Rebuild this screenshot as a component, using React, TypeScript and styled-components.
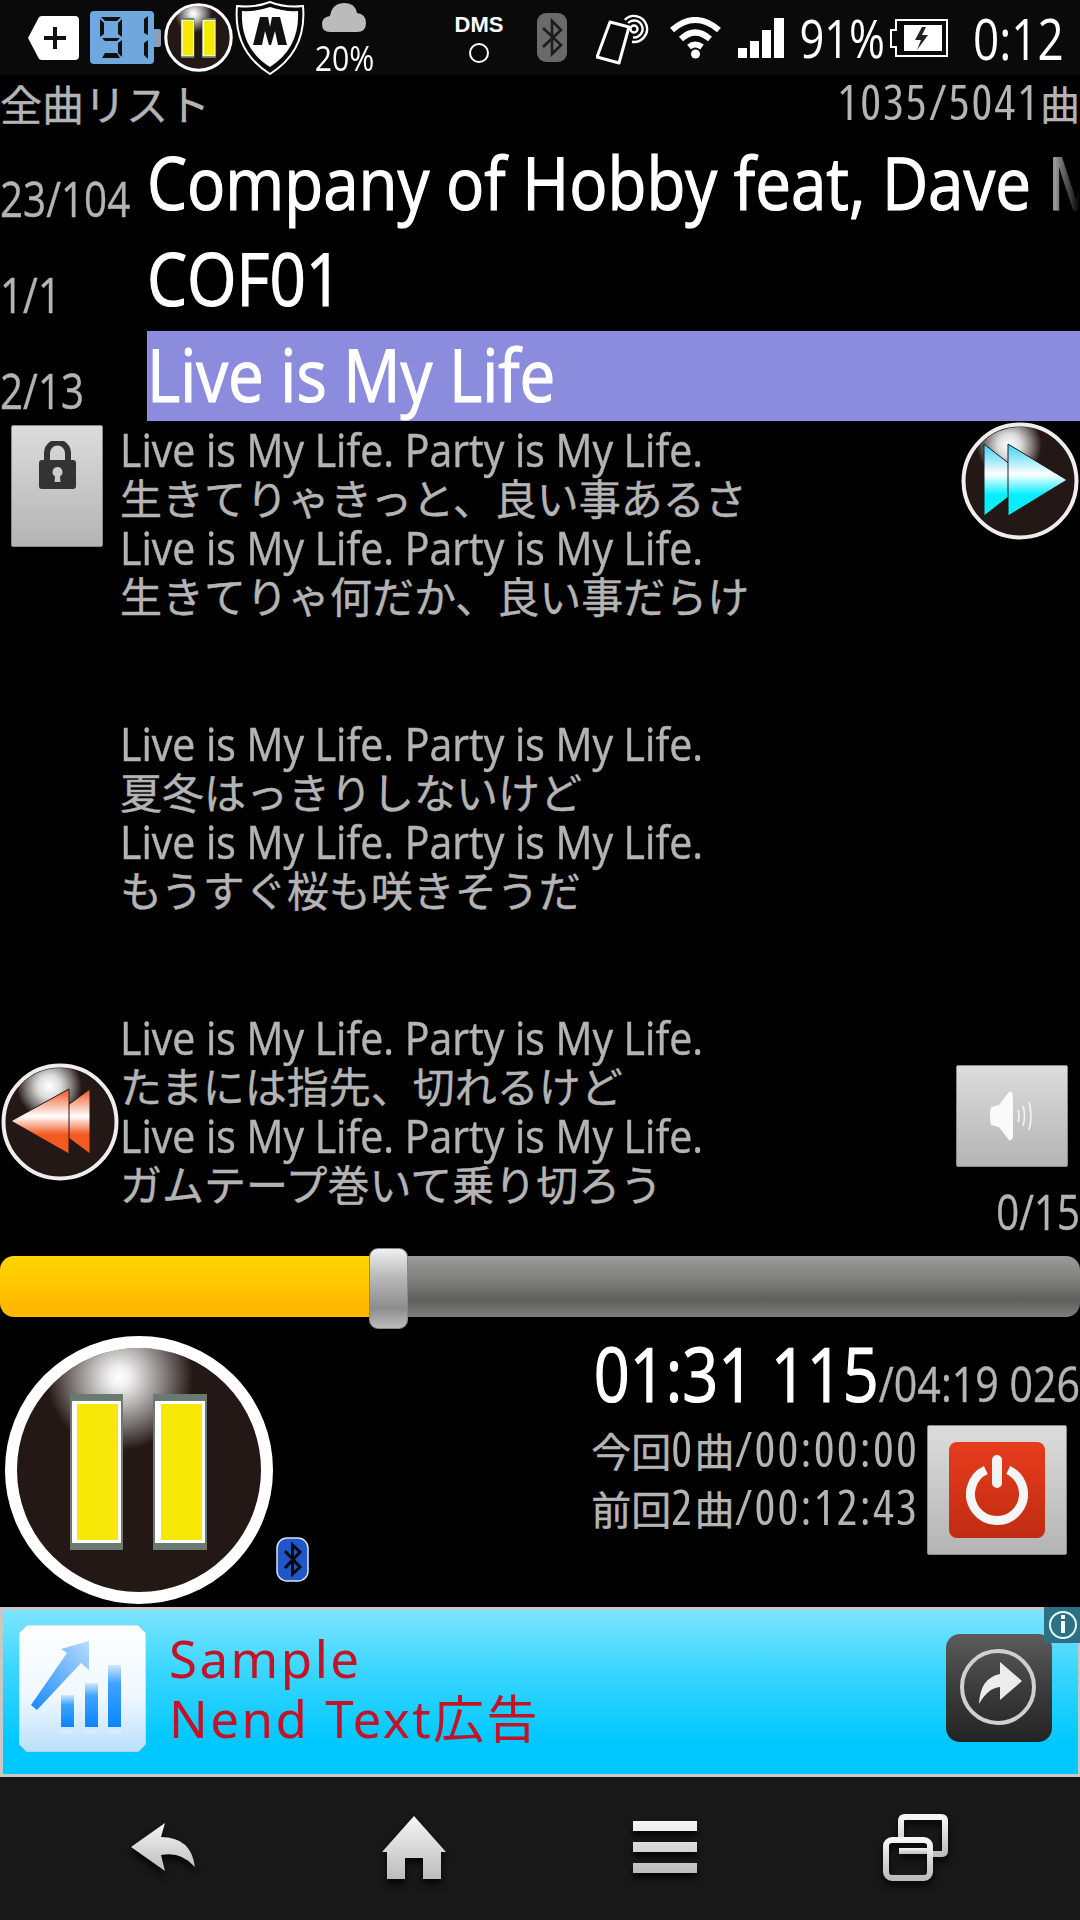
import React from 'react';
import styled, { createGlobalStyle } from 'styled-components';

const Global = createGlobalStyle`
  html, body { margin: 0; padding: 0; background: #000; }
  * { box-sizing: border-box; }
`;

const Page = styled.div`
  width: 1080px;
  height: 1920px;
  background: #000;
  display: flex;
  flex-direction: column;
  overflow: hidden;
  font-family: "Open Sans", "Noto Sans CJK JP", sans-serif;
  color: #b4b4b4;
`;

const Cjk = styled.span<{ $size: number }>`
  font-family: "Noto Sans CJK JP", sans-serif;
  font-size: ${p => p.$size}px;
  font-stretch: normal;
  -webkit-text-stroke: 0.4px #b4b4b4;
  letter-spacing: 0;
`;

/* status bar */
const StatusBar = styled.div`
  height: 75px;
  flex: none;
  background: #0a0a0a;
  display: flex;
  align-items: center;
`;
const Slot = styled.div<{ $ml: number; $w: number }>`
  margin-left: ${p => p.$ml}px;
  width: ${p => p.$w}px;
  flex: none;
  display: flex;
  flex-direction: column;
  align-items: center;
  color: #fff;
  svg { display: block; }
`;
const StatusText = styled.span<{ $size: number }>`
  font-size: ${p => p.$size}px;
  line-height: 50px;
  color: #fff;
  white-space: nowrap;
  transform: scaleX(0.82);
`;
const WeatherText = styled.span`
  font-size: 34px;
  line-height: 30px;
  color: #fff;
  margin-top: 11px;
  white-space: nowrap;
  transform: scaleX(0.89);
`;
const DmsText = styled.span`
  font-family: "Liberation Sans", sans-serif;
  font-weight: 700;
  font-size: 22px;
  line-height: 24px;
  color: #fff;
`;
const DmsDot = styled.span`
  width: 20px;
  height: 20px;
  margin-top: 6px;
  border: 2px solid #fff;
  border-radius: 50%;
`;

/* header */
const Header = styled.div`
  height: 64px;
  flex: none;
  display: flex;
  justify-content: space-between;
  align-items: flex-end;
  padding-bottom: 6px;
  font-size: 49px;
  font-stretch: 75%;
  letter-spacing: 2px;
  line-height: 60px;
  white-space: nowrap;
`;

/* track rows */
const TrackRow = styled.div`
  height: 96px;
  flex: none;
  display: flex;
  align-items: flex-start;
`;
const Count = styled.div`
  width: 147px;
  flex: none;
  font-size: 49px;
  line-height: 60px;
  margin-top: 29px;
  white-space: nowrap;
  -webkit-text-stroke: 0.4px #b4b4b4;
  transform: scaleX(0.824);
  transform-origin: left center;
`;
const Title = styled.div<{ $active?: boolean }>`
  flex: 1;
  height: 90px;
  min-width: 0;
  position: relative;
  overflow: hidden;
  font-size: 74px;
  line-height: 86px;
  color: #fff;
  white-space: nowrap;
  -webkit-text-stroke: 1.2px #fff;
  background: ${p => (p.$active ? '#8c8cdf' : 'transparent')};
`;
const TitleText = styled.span`
  display: inline-block;
  transform: scaleX(0.86);
  transform-origin: left center;
`;
const Fade = styled.div`
  position: absolute;
  top: 0;
  right: 0;
  bottom: 0;
  width: 42px;
  background: linear-gradient(to right, rgba(0, 0, 0, 0), #000);
`;

/* lyrics */
const LyricsPane = styled.div`
  height: 821px;
  flex: none;
  position: relative;
  padding-left: 120px;
`;
const LyricLine = styled.div`
  height: 49px;
  font-size: 45px;
  line-height: 45px;
  white-space: nowrap;
  -webkit-text-stroke: 0.5px #b4b4b4;
  transform: scaleX(0.912);
  transform-origin: left center;
`;
const CjkLine = styled.div`
  height: 49px;
  font-family: "Noto Sans CJK JP", sans-serif;
  font-size: 42px;
  line-height: 41px;
  white-space: nowrap;
  -webkit-text-stroke: 0.4px #b4b4b4;
`;
const Floating = styled.div<{ $left: number; $top: number }>`
  position: absolute;
  left: ${p => p.$left}px;
  top: ${p => p.$top}px;
  svg { display: block; }
`;
const GrayKey = styled.div<{ $w: number; $h: number }>`
  width: ${p => p.$w}px;
  height: ${p => p.$h}px;
  border-radius: 2px;
  background: linear-gradient(#dcdcdc, #b4b4b4);
  border: 1px solid #8a8a8a;
  display: flex;
  align-items: center;
  justify-content: center;
`;
const LockKey = styled(GrayKey)`
  align-items: flex-start;
  padding-top: 15px;
`;
const VolumeText = styled.div`
  position: absolute;
  right: 0;
  top: 754px;
  font-size: 49px;
  line-height: 60px;
  -webkit-text-stroke: 0.4px #b4b4b4;
  transform: scaleX(0.82);
  transform-origin: right center;
`;

/* seek bar */
const SeekArea = styled.div`
  height: 81px;
  flex: none;
  display: flex;
  align-items: flex-start;
  padding-top: 8px;
  position: relative;
`;
const SeekDone = styled.div`
  width: 372px;
  height: 61px;
  flex: none;
  border-radius: 14px 0 0 14px;
  background: linear-gradient(#ffd500 0%, #ffc800 45%, #ffb700 85%, #ffb900 100%);
`;
const SeekRest = styled.div`
  flex: 1;
  height: 61px;
  border-radius: 0 14px 14px 0;
  background: linear-gradient(#9a9a9a 0%, #7e7f7c 40%, #5f605d 72%, #7d7d7d 100%);
`;
const Thumb = styled.div`
  position: absolute;
  left: 369px;
  top: 0;
  width: 39px;
  height: 81px;
  border-radius: 9px;
  border: 1px solid #888;
  background: linear-gradient(#f0f0f0 0%, #b9b9b9 35%, #8d8d8d 75%, #bdbdbd 100%);
`;

/* transport */
const Transport = styled.div`
  height: 278px;
  flex: none;
  position: relative;
  display: flex;
`;
const PauseCell = styled.div`
  margin: 6px 0 0 4px;
  width: 270px;
  height: 270px;
  flex: none;
  svg { display: block; }
`;
const BtCell = styled.div`
  align-self: flex-start;
  margin: 208px 0 0 2px;
  width: 33px;
  flex: none;
  svg { display: block; }
`;
const Times = styled.div`
  flex: 1;
  display: flex;
  flex-direction: column;
  align-items: flex-end;
  min-width: 0;
`;
const TimeLine = styled.div`
  height: 88px;
  display: flex;
  align-items: baseline;
  font-size: 49px;
  line-height: 88px;
  white-space: nowrap;
  -webkit-text-stroke: 0.4px #b4b4b4;
  transform: scaleX(0.84);
  transform-origin: right center;
`;
const TimeNow = styled.span`
  font-size: 75px;
  color: #fff;
  -webkit-text-stroke: 1.2px #fff;
`;
const SessionArea = styled.div`
  display: flex;
  align-self: stretch;
  justify-content: flex-end;
`;
const Sessions = styled.div`
  display: flex;
  flex-direction: column;
  margin-right: 8px;
  padding-top: 2px;
  align-items: flex-end;
`;
const SessionLine = styled.div`
  height: 58px;
  font-size: 49px;
  font-stretch: 75%;
  letter-spacing: 2.2px;
  line-height: 58px;
  white-space: nowrap;
`;
const PowerKey = styled(GrayKey)`
  margin-right: 13px;
  margin-top: 8px;
`;
const PowerFace = styled.div`
  width: 96px;
  height: 96px;
  border-radius: 8px;
  background: linear-gradient(#e63c1c, #c02c12);
  display: flex;
  align-items: center;
  justify-content: center;
`;

/* ad */
const Ad = styled.div`
  height: 170px;
  flex: none;
  position: relative;
  display: flex;
  align-items: flex-start;
  border: 3px solid #c8c8c8;
  border-width: 3px 2px 3px 3px;
  background: linear-gradient(#7de5ff 0%, #3dd6ff 35%, #00c8ff 80%, #00c8ff 100%);
  svg { display: block; }
`;
const AdIcon = styled.div`
  margin: 15px 0 0 16px;
  flex: none;
`;
const AdText = styled.div`
  margin: 18px 0 0 23px;
  font-family: "Noto Sans", "Noto Sans CJK JP", sans-serif;
  font-size: 51px;
  line-height: 60px;
  letter-spacing: 2.5px;
  color: #c41227;
  flex: 1;
  white-space: nowrap;
`;
const AdGo = styled.div`
  margin: 24px 26px 0 0;
  flex: none;
`;
const AdInfo = styled.div`
  position: absolute;
  right: -2px;
  top: -3px;
`;

/* nav */
const NavBar = styled.div`
  flex: 1;
  background: #181818;
  display: grid;
  grid-template-columns: repeat(4, 251px);
  padding: 0 0 3px 37px;
  align-items: center;
  justify-items: center;
  svg { display: block; filter: drop-shadow(0 5px 3px rgba(0, 0, 0, 0.8)); }
`;

/* drawings */
const PauseGlyph = ({ size }: { size: number }) => (
  <svg width={size} height={size} viewBox="0 0 270 270">
    <defs>
      <radialGradient id="pg" cx="0.42" cy="0.12" r="0.3">
        <stop offset="0" stopColor="#fff" />
        <stop offset="0.15" stopColor="#eee" />
        <stop offset="1" stopColor="#fff" stopOpacity="0" />
      </radialGradient>
    </defs>
    <circle cx="135" cy="135" r="128" fill="#231815" stroke="#fff" strokeWidth="12" />
    <circle cx="135" cy="135" r="122" fill="url(#pg)" />
    <rect x="66" y="59" width="53" height="156" fill="#6b7a70" />
    <rect x="149" y="59" width="54" height="156" fill="#6b7a70" />
    <rect x="68" y="66" width="49" height="142" fill="#fff" />
    <rect x="151" y="66" width="50" height="142" fill="#fff" />
    <rect x="73" y="69" width="41" height="136" fill="#f6e908" />
    <rect x="157" y="69" width="41" height="136" fill="#f6e908" />
  </svg>
);

const SeekGlyph = ({ dir }: { dir: 'ff' | 'rw' }) => {
  const id = dir === 'ff' ? 'ffg' : 'rwg';
  const c = dir === 'ff' ? '#08eeff' : '#f25a22';
  const top = dir === 'ff' ? '#35d0f5' : '#f0531c';
  return (
    <svg width="120" height="120" viewBox="0 0 120 120">
      <defs>
        <radialGradient id={id + 'h'} cx="0.4" cy="0.17" r="0.3">
          <stop offset="0" stopColor="#fff" />
          <stop offset="0.35" stopColor="#ddd" />
          <stop offset="1" stopColor="#fff" stopOpacity="0" />
        </radialGradient>
        <linearGradient id={id} x1="0" y1="0" x2="0" y2="1">
          <stop offset="0" stopColor={top} />
          <stop offset="0.42" stopColor="#fff" />
          <stop offset="0.7" stopColor={c} />
          <stop offset="1" stopColor={c} />
        </linearGradient>
      </defs>
      <circle cx="60" cy="60" r="56.5" fill="#231815" stroke="#eee" strokeWidth="4" />
      <circle cx="60" cy="60" r="54" fill={`url(#${id}h)`} />
      {dir === 'ff' ? (
        <g fill={`url(#${id})`} stroke="#231815" strokeWidth="1">
          <path d="M24 23 L70 59 L24 95 Z" />
          <path d="M48 23 L107 59 L48 95 Z" />
        </g>
      ) : (
        <g fill={`url(#${id})`} stroke="#231815" strokeWidth="1">
          <path d="M90 27 L46 59 L90 92 Z" />
          <path d="M69 27 L11 59 L69 92 Z" />
        </g>
      )}
    </svg>
  );
};

const LockGlyph = () => (
  <svg width="37" height="48" viewBox="0 0 37 48">
    <path d="M8 20 V12 A10.5 10.5 0 0 1 29 12 V20" fill="none" stroke="#333" strokeWidth="6" />
    <path fillRule="evenodd" fill="#333" d="M3 19 H34 Q37 19 37 22 V45 Q37 48 34 48 H3 Q0 48 0 45 V22 Q0 19 3 19 Z M18.5 26 A5 5 0 0 0 16 35.3 L15.5 41 H21.5 L21 35.3 A5 5 0 0 0 18.5 26 Z" />
  </svg>
);

const SpeakerGlyph = () => (
  <svg width="46" height="50" viewBox="0 0 46 50">
    <path d="M2 16 Q0 25 2 34 L10 36 L20 49 Q24 50 24 44 V6 Q24 0 20 1 L10 14 Z" fill="#fafafa" />
    <g fill="none" stroke="#f4f4f4" strokeWidth="1.6">
      <path d="M29 19 Q31 25 29 31" />
      <path d="M34 15 Q37 25 34 35" />
      <path d="M40 11 Q44 25 40 39" />
    </g>
  </svg>
);

const PowerGlyph = () => (
  <svg width="62" height="70" viewBox="0 0 62 70">
    <path d="M19.8 15 A26.5 26.5 0 1 0 42.2 15" fill="none" stroke="#f6f6f6" strokeWidth="9" />
    <rect x="26" y="0" width="10" height="33" rx="5" fill="#f2f2f2" />
  </svg>
);

const BtBadge = () => (
  <svg width="33" height="45" viewBox="0 0 33 45">
    <rect x="1" y="1" width="31" height="43" rx="10" fill="#1f56c8" stroke="#d8e2f8" strokeWidth="1.5" />
    <path d="M9 14 L24 30 L16.5 37 V8 L24 15 L9 31" fill="none" stroke="#0a0a0a" strokeWidth="3" />
  </svg>
);

const AdChart = () => (
  <svg width="127" height="127" viewBox="0 0 127 127">
    <defs>
      <linearGradient id="adb" x1="0" y1="0" x2="0" y2="1">
        <stop offset="0" stopColor="#fdfeff" />
        <stop offset="0.55" stopColor="#f0f9ff" />
        <stop offset="1" stopColor="#b9e0fb" />
      </linearGradient>
      <linearGradient id="adbar" x1="0" y1="0" x2="0" y2="1">
        <stop offset="0" stopColor="#cfe8ff" />
        <stop offset="0.3" stopColor="#3da3ff" />
        <stop offset="1" stopColor="#0a84ff" />
      </linearGradient>
      <linearGradient id="adarr" x1="1" y1="0" x2="0" y2="1">
        <stop offset="0" stopColor="#b8dcff" />
        <stop offset="1" stopColor="#1788ff" />
      </linearGradient>
    </defs>
    <path d="M8 0 H119 L127 8 V119 L119 127 H8 L0 119 V8 Z" fill="url(#adb)" stroke="#a8c8dc" />
    <path d="M12 80 L48 28 L42 24 L70 16 L70 45 L62 38 L18 85 Z" fill="url(#adarr)" />
    <rect x="42" y="70" width="13" height="32" fill="url(#adbar)" />
    <rect x="66" y="58" width="13" height="44" fill="url(#adbar)" />
    <rect x="89" y="40" width="13" height="62" fill="url(#adbar)" />
    <g fill="#d6ecff">
      <rect x="42" y="105" width="13" height="3" />
      <rect x="66" y="105" width="13" height="3" />
      <rect x="89" y="105" width="13" height="3" />
    </g>
  </svg>
);

const AdArrow = () => (
  <svg width="106" height="108" viewBox="0 0 106 108">
    <defs>
      <linearGradient id="adg" x1="0" y1="0" x2="0" y2="1">
        <stop offset="0" stopColor="#5c5c5c" />
        <stop offset="0.5" stopColor="#3c3c3c" />
        <stop offset="1" stopColor="#242424" />
      </linearGradient>
    </defs>
    <rect width="106" height="108" rx="14" fill="url(#adg)" />
    <circle cx="52" cy="53" r="36" fill="none" stroke="#d0d0d0" strokeWidth="4" />
    <path d="M33 70 Q34 44 54 40 V28 L76 47 L54 66 V53 Q42 54 33 70 Z" fill="#ececec" />
  </svg>
);

const InfoBadge = () => (
  <svg width="36" height="36" viewBox="0 0 36 36">
    <rect width="36" height="36" fill="#2f6f82" />
    <circle cx="19" cy="18" r="13" fill="none" stroke="#dff" strokeWidth="2" />
    <rect x="17" y="14" width="4" height="12" fill="#eff" />
    <rect x="17" y="8" width="4" height="4" fill="#eff" />
  </svg>
);

const NavGradient = () => (
  <defs>
    <linearGradient id="nv" x1="0" y1="0" x2="0" y2="1">
      <stop offset="0" stopColor="#f6f6f6" />
      <stop offset="1" stopColor="#bcbcbc" />
    </linearGradient>
  </defs>
);

const App = () => (
  <Page>
    <Global />
    <StatusBar>
      <Slot $ml={28} $w={51}>
        <svg width="51" height="44" viewBox="0 0 51 44">
          <path d="M10 3 Q11 0 14 0 H47 Q51 0 51 4 V40 Q51 44 47 44 H14 Q11 44 10 41 L0 22 Z" fill="#fff" />
          <path d="M25 20 H16 V24 H25 V33 H29 V24 H38 V20 H29 V11 H25 Z" fill="#111" />
        </svg>
      </Slot>
      <Slot $ml={11} $w={71}>
        <svg width="71" height="53" viewBox="0 0 71 53">
          <rect x="63" y="18" width="8" height="18" rx="2" fill="#8a9fb8" />
          <rect width="64" height="53" rx="4" fill="#6fa8dc" />
          <g fill="#111">
            <path d="M11 6 H31 L27 10 H15 Z" />
            <path d="M10 8 L14 12 V23 L10 26 Z" />
            <path d="M32 8 L28 12 V23 L32 26 Z" />
            <path d="M12 27 H30 L27 30 H15 Z" />
            <path d="M32 29 L28 32 V42 L32 46 Z" />
            <path d="M15 42 H27 L30 47 H12 Z" />
            <path d="M54 8 L58 5 V24 L54 22 Z" />
            <path d="M54 32 L58 29 V48 L54 44 Z" />
          </g>
        </svg>
      </Slot>
      <Slot $ml={3} $w={69}><PauseGlyph size={69} /></Slot>
      <Slot $ml={2} $w={70}>
        <svg width="70" height="74" viewBox="0 0 70 74">
          <path d="M35 1 Q50 7 68 5 Q72 50 35 73 Q-2 50 2 5 Q20 7 35 1 Z" fill="#0a0a0a" stroke="#fff" strokeWidth="2" />
          <path d="M35 6 Q50 11 63 10 Q65 47 35 66 Q5 47 7 10 Q20 11 35 6 Z" fill="#fff" />
          <path d="M18 44 L25 16 H33 L35 26 L37 16 H45 L52 44 H43 L40 30 L36 44 H34 L30 30 L27 44 Z" fill="#111" />
        </svg>
      </Slot>
      <Slot $ml={9} $w={60}>
        <svg width="44" height="29" viewBox="0 0 44 29">
          <path d="M8 29 Q0 29 0 21 Q0 14 8 13 Q10 0 23 0 Q33 0 35 10 Q44 11 44 20 Q44 29 35 29 Z" fill="#bbb" />
        </svg>
        <WeatherText>20%</WeatherText>
      </Slot>
      <Slot $ml={79} $w={52}><DmsText>DMS</DmsText><DmsDot /></Slot>
      <Slot $ml={32} $w={30}>
        <svg width="30" height="49" viewBox="0 0 30 49">
          <rect width="30" height="49" rx="9" fill="#6a6a6a" />
          <path d="M6 15 L24 32 L15 41 V8 L24 17 L6 34" fill="none" stroke="#1c1c1c" strokeWidth="2.6" />
        </svg>
      </Slot>
      <Slot $ml={30} $w={51}>
        <svg width="53" height="55" viewBox="0 0 53 55">
          <path d="M14 12 L33 17 L23 53 L1 47 Z" fill="#0a0a0a" stroke="#fff" strokeWidth="3" strokeLinejoin="round" />
          <g fill="none" stroke="#fff" strokeWidth="2.4">
            <path d="M28.8 9.8 A13 13 0 1 1 36 31.8" />
            <path d="M32 13 A8.5 8.5 0 1 1 37 27.4" />
            <circle cx="38" cy="19" r="3.5" />
          </g>
        </svg>
      </Slot>
      <Slot $ml={22} $w={51}>
        <svg width="51" height="42" viewBox="0 0 51 42">
          <g fill="none" stroke="#fff" strokeWidth="6">
            <path d="M2 13 Q25 -7 49 13" />
            <path d="M11 22 Q25 9 40 22" />
            <path d="M19 30 Q25 25 32 30" />
          </g>
          <circle cx="25.5" cy="37" r="4.5" fill="#fff" />
        </svg>
      </Slot>
      <Slot $ml={17} $w={46}>
        <svg width="46" height="40" viewBox="0 0 46 40">
          <rect x="0" y="30" width="9" height="10" fill="#fff" />
          <rect x="12" y="23" width="9" height="17" fill="#fff" />
          <rect x="24" y="12" width="9" height="28" fill="#fff" />
          <rect x="36" y="0" width="10" height="40" fill="#fff" />
        </svg>
      </Slot>
      <Slot $ml={18} $w={80}><StatusText $size={53}>91%</StatusText></Slot>
      <Slot $ml={8} $w={58}>
        <svg width="58" height="38" viewBox="0 0 58 38">
          <path d="M6 11 H1 V28 H6 V37 H57 V1 H6 Z" fill="none" stroke="#fff" strokeWidth="2" />
          <rect x="14" y="6" width="38" height="26" fill="#fff" />
          <path d="M32 8 L25 21 H31 L27 31 L38 16 H32 L36 8 Z" fill="#222" />
        </svg>
      </Slot>
      <Slot $ml={24} $w={92}><StatusText $size={56}>0:12</StatusText></Slot>
    </StatusBar>

    <Header>
      <Cjk $size={42}>全曲リスト</Cjk>
      <span>1035/5041<Cjk $size={40}>曲</Cjk></span>
    </Header>

    <TrackRow>
      <Count>23/104</Count>
      <Title><TitleText>Company of Hobby feat, Dave Mat</TitleText><Fade /></Title>
    </TrackRow>
    <TrackRow>
      <Count>1/1</Count>
      <Title><TitleText>COF01</TitleText></Title>
    </TrackRow>
    <TrackRow>
      <Count>2/13</Count>
      <Title $active><TitleText>Live is My Life</TitleText></Title>
    </TrackRow>

    <LyricsPane>
      <LyricLine>Live is My Life. Party is My Life.</LyricLine>
      <CjkLine>生きてりゃきっと、良い事あるさ</CjkLine>
      <LyricLine>Live is My Life. Party is My Life.</LyricLine>
      <CjkLine>生きてりゃ何だか、良い事だらけ</CjkLine>
      <LyricLine />
      <LyricLine />
      <LyricLine>Live is My Life. Party is My Life.</LyricLine>
      <CjkLine>夏冬はっきりしないけど</CjkLine>
      <LyricLine>Live is My Life. Party is My Life.</LyricLine>
      <CjkLine>もうすぐ桜も咲きそうだ</CjkLine>
      <LyricLine />
      <LyricLine />
      <LyricLine>Live is My Life. Party is My Life.</LyricLine>
      <CjkLine>たまには指先、切れるけど</CjkLine>
      <LyricLine>Live is My Life. Party is My Life.</LyricLine>
      <CjkLine>ガムテープ巻いて乗り切ろう</CjkLine>

      <Floating $left={11} $top={-2}>
        <LockKey $w={92} $h={122}><LockGlyph /></LockKey>
      </Floating>
      <Floating $left={960} $top={-6}><SeekGlyph dir="ff" /></Floating>
      <Floating $left={0} $top={635}><SeekGlyph dir="rw" /></Floating>
      <Floating $left={956} $top={638}>
        <GrayKey $w={112} $h={102}><SpeakerGlyph /></GrayKey>
      </Floating>
      <VolumeText>0/15</VolumeText>
    </LyricsPane>

    <SeekArea>
      <SeekDone />
      <SeekRest />
      <Thumb />
    </SeekArea>

    <Transport>
      <PauseCell><PauseGlyph size={270} /></PauseCell>
      <BtCell><BtBadge /></BtCell>
      <Times>
        <TimeLine><TimeNow>01:31 115</TimeNow>/04:19 026</TimeLine>
        <SessionArea>
          <Sessions>
            <SessionLine><Cjk $size={40}>今回</Cjk>0<Cjk $size={40}>曲</Cjk>/00:00:00</SessionLine>
            <SessionLine><Cjk $size={40}>前回</Cjk>2<Cjk $size={40}>曲</Cjk>/00:12:43</SessionLine>
          </Sessions>
          <PowerKey $w={140} $h={130}>
            <PowerFace><PowerGlyph /></PowerFace>
          </PowerKey>
        </SessionArea>
      </Times>
    </Transport>

    <Ad>
      <AdIcon><AdChart /></AdIcon>
      <AdText>Sample<br />Nend Text広告</AdText>
      <AdGo><AdArrow /></AdGo>
      <AdInfo><InfoBadge /></AdInfo>
    </Ad>

    <NavBar>
      <svg width="64" height="48" viewBox="0 0 64 48">
        <NavGradient />
        <path d="M34 0 L0 24 L34 48 L30 32 Q50 28 64 44 Q60 14 30 14 Z" fill="url(#nv)" />
      </svg>
      <svg width="64" height="63" viewBox="0 0 64 63">
        <NavGradient />
        <path fillRule="evenodd" d="M32 0 L64 36 H59 V63 H41 V42 H23 V63 H5 V36 H0 Z" fill="url(#nv)" />
      </svg>
      <svg width="64" height="52" viewBox="0 0 64 52">
        <NavGradient />
        <path d="M0 0 H64 V10 H0 Z M0 21 H64 V31 H0 Z M0 42 H64 V52 H0 Z" fill="url(#nv)" />
      </svg>
      <svg width="65" height="67" viewBox="0 0 65 67">
        <NavGradient />
        <g fill="none" stroke="url(#nv)" strokeWidth="6">
          <path d="M18 23 V7 Q18 3 22 3 H58 Q62 3 62 7 V37 Q62 40 58 40 H50" />
          <rect x="3" y="26" width="44" height="38" rx="6" />
        </g>
        <rect x="16" y="34" width="28" height="6" fill="url(#nv)" />
      </svg>
    </NavBar>
  </Page>
);

export default App;
